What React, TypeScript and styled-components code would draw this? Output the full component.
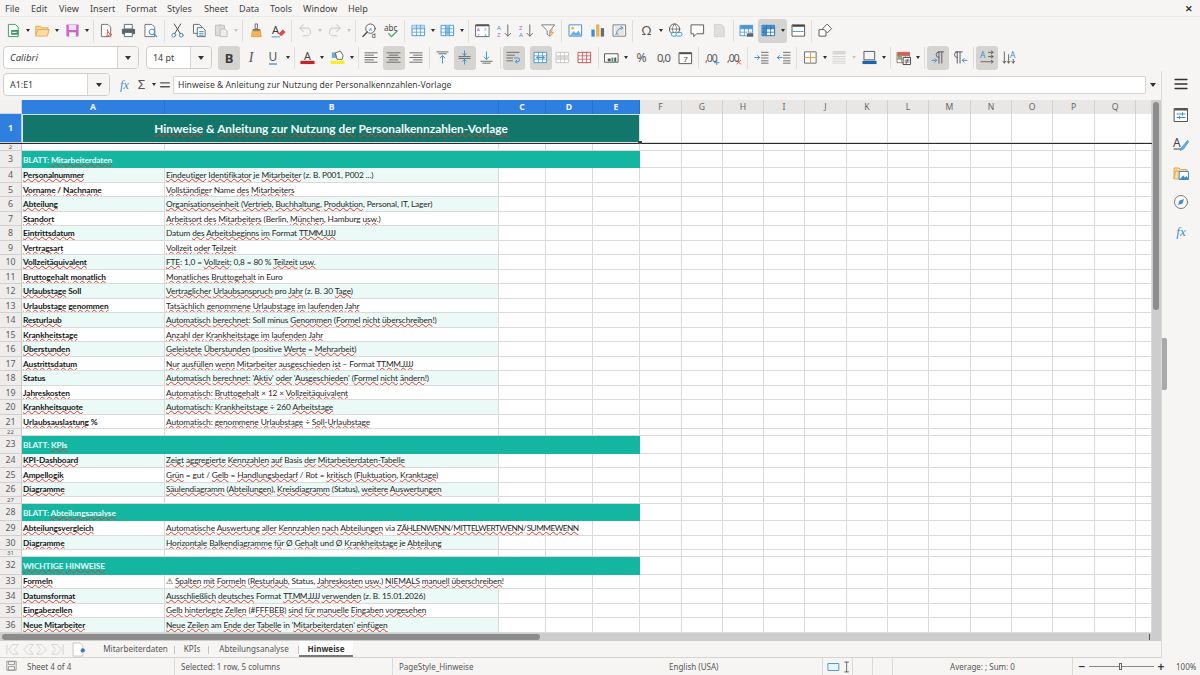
import React from "react";
import styled, { createGlobalStyle } from "styled-components";

const GlobalStyle = createGlobalStyle`
  html, body { margin: 0; padding: 0; width: 1200px; height: 675px; overflow: hidden; background: #f6f5f4; }
  * { box-sizing: border-box; }
`;

const UI = `"Noto Sans", "Open Sans", sans-serif`;
const SHEET = `Lato, "Open Sans", sans-serif`;

const COLS = [143, 334, 47, 47, 47, 42, 41, 41, 41, 42, 41, 41, 42, 41, 41, 42, 41, 16];
const LETTERS = ["A", "B", "C", "D", "E", "F", "G", "H", "I", "J", "K", "L", "M", "N", "O", "P", "Q", ""];
const TEMPLATE = `22px ${COLS.map((c) => c + "px").join(" ")}`;

const Page = styled.div`
  width: 1200px;
  height: 675px;
  display: flex;
  flex-direction: column;
  font-family: ${UI};
  color: #3c3c3c;
  overflow: hidden;
`;
const MenuBar = styled.div`
  height: 17px;
  display: flex;
  align-items: center;
  padding-left: 5px;
  font-size: 9.1px;
  color: #444;
  border-bottom: 1px solid #eceae8;
`;
const MenuItem = styled.span<{ $w: number }>`
  width: ${(p) => p.$w}px;
`;
const CloseMark = styled.span`
  margin-left: auto;
  margin-right: 7px;
  font-size: 9px;
  font-weight: 700;
  color: #333;
`;
const Toolbar = styled.div<{ $pad?: number }>`
  height: 27px;
  display: flex;
  align-items: center;
  padding-left: ${(p) => p.$pad ?? 2}px;
`;
const Btn = styled.div<{ $active?: boolean; $w?: number }>`
  width: ${(p) => p.$w ?? 22}px;
  height: 24px;
  flex: none;
  display: flex;
  align-items: center;
  justify-content: center;
  border-radius: 3px;
  background: ${(p) => (p.$active ? "#d6d4d1" : "transparent")};
`;
const ActiveGroup = styled.div`
  display: flex;
  flex: none;
  height: 24px;
  border-radius: 3px;
  background: #d6d4d1;
`;
const Drop = styled.div<{ $muted?: boolean }>`
  width: 7.5px;
  height: 24px;
  flex: none;
  display: flex;
  align-items: center;
  justify-content: center;
  &::after {
    content: "";
    border-left: 2.5px solid transparent;
    border-right: 2.5px solid transparent;
    border-top: 3px solid ${(p) => (p.$muted ? "#c4c4c4" : "#2e2e2e")};
  }
`;
const Sep = styled.div<{ $hide?: boolean }>`
  width: 5px;
  height: 22px;
  flex: none;
  display: flex;
  justify-content: center;
  &::after {
    content: "";
    width: 1px;
    background: ${(p) => (p.$hide ? "transparent" : "#e0dedb")};
  }
`;
const Combo = styled.div<{ $w: number; $split: number; $gap?: number }>`
  width: ${(p) => p.$w}px;
  margin-right: ${(p) => p.$gap ?? 0}px;
  height: 23px;
  flex: none;
  display: grid;
  grid-template-columns: ${(p) => p.$split}px 1fr;
  border: 1px solid #d0cecb;
  border-radius: 4px;
  overflow: hidden;
  background: #fff;
`;
const ComboText = styled.div<{ $italic?: boolean }>`
  display: flex;
  align-items: center;
  padding-left: 6px;
  font-size: ${(p) => (p.$italic ? 9.6 : 8.9)}px;
  font-style: ${(p) => (p.$italic ? "italic" : "normal")};
  color: #3c3c3c;
`;
const ComboArrow = styled.div`
  display: flex;
  align-items: center;
  justify-content: center;
  background: #f6f5f4;
  border-left: 1px solid #d8d6d3;
  &::after {
    content: "";
    border-left: 3.5px solid transparent;
    border-right: 3.5px solid transparent;
    border-top: 4px solid #333;
  }
`;
const Main = styled.div`
  height: 587px;
  display: flex;
`;
const Workspace = styled.div`
  width: 1161px;
  display: flex;
  flex-direction: column;
`;
const FormulaBar = styled.div`
  height: 29px;
  display: flex;
  align-items: flex-start;
  padding: 2px 0 0 3px;
`;
const FormulaTools = styled.div`
  display: flex;
  align-items: center;
  height: 23px;
  width: 63px;
  padding-left: 6px;
`;
const SmallBtn = styled.div<{ $w: number }>`
  width: ${(p) => p.$w}px;
  height: 23px;
  display: flex;
  align-items: center;
  justify-content: center;
`;
const FormulaInput = styled.div`
  width: 973px;
  height: 18px;
  margin-top: 3px;
  background: #fff;
  border: 1px solid #d8d6d3;
  border-radius: 1px;
  font-size: 8.65px;
  line-height: 16px;
  padding-left: 4px;
  color: #3c3c3c;
  white-space: nowrap;
`;
const FormulaDrop = styled(Drop)`
  height: 23px;
  width: 13px;
  &::after {
    border-left-width: 3.5px;
    border-right-width: 3.5px;
    border-top-width: 4px;
  }
`;
const SheetFrame = styled.div`
  display: grid;
  grid-template-columns: 1152px 9px;
  grid-template-rows: 533px 8px;
  height: 541px;
`;
const SheetGrid = styled.div`
  background: #fff;
  overflow: hidden;
`;
const HeadRow = styled.div`
  display: grid;
  grid-template-columns: ${TEMPLATE};
  height: 14px;
`;
const Corner = styled.div`
  background: #f2f1ef;
  border-right: 1px solid #d4d4d4;
  border-bottom: 1px solid #d4d4d4;
`;
const ColHead = styled.div<{ $sel: boolean }>`
  display: flex;
  align-items: center;
  justify-content: center;
  font-size: 8.6px;
  font-weight: ${(p) => (p.$sel ? 700 : 400)};
  background: ${(p) => (p.$sel ? "#2f7fe0" : "#e8e7e5")};
  color: ${(p) => (p.$sel ? "#f4f8ff" : "#666")};
  border-right: 1px solid ${(p) => (p.$sel ? "#2a70c8" : "#d2d1cf")};
`;
const Row = styled.div<{ $h: number; $freeze?: boolean }>`
  display: grid;
  grid-template-columns: ${TEMPLATE};
  height: ${(p) => p.$h}px;
  position: relative;
  border-bottom: ${(p) => (p.$freeze ? "1px solid #2b2b2b" : "none")};
`;
const RowHead = styled.div<{ $sel?: boolean; $tiny?: boolean }>`
  display: flex;
  align-items: center;
  justify-content: center;
  overflow: hidden;
  font-size: ${(p) => (p.$tiny ? 6 : 8.8)}px;
  line-height: ${(p) => (p.$tiny ? "6px" : "normal")};
  font-weight: ${(p) => (p.$sel ? 700 : 400)};
  background: ${(p) => (p.$sel ? "#2f7fe0" : "#eeedeb")};
  color: ${(p) => (p.$sel ? "#f4f8ff" : "#5c5c5c")};
  border-right: 1px solid #c9c9c9;
  border-bottom: 1px solid #d2d1cf;
`;
const Cell = styled.div<{ $tint?: boolean; $span?: number }>`
  grid-column: span ${(p) => p.$span ?? 1};
  display: flex;
  align-items: center;
  padding-left: 1px;
  white-space: nowrap;
  overflow: hidden;
  font-family: ${SHEET};
  font-size: 8.3px;
  letter-spacing: -0.11px;
  color: #262626;
  background: ${(p) => (p.$tint ? "#ebfaf7" : "#fff")};
  border-right: 1px solid #dadada;
  border-bottom: 1px solid #dadada;
`;
const LabelCell = styled(Cell)`
  font-weight: 700;
  color: #161616;
`;
const TitleCell = styled.div`
  grid-column: span 5;
  display: flex;
  align-items: center;
  justify-content: center;
  font-family: ${SHEET};
  font-size: 11.85px;
  font-weight: 700;
  color: #f2fbf9;
  background: #12776a;
  border: 1px solid #cfe6e2;
`;
const SectionCell = styled.div`
  grid-column: span 5;
  display: flex;
  align-items: center;
  padding-left: 1px;
  font-family: ${SHEET};
  font-size: 8.3px;
  letter-spacing: -0.11px;
  font-weight: 700;
  color: #e8fbf8;
  background: #14b6a2;
`;
const FillHandle = styled.div`
  position: absolute;
  left: 638px;
  bottom: -2px;
  width: 4px;
  height: 4px;
  background: #444;
`;
const Wavy = styled.span<{ $caps?: boolean }>`
  text-decoration: underline wavy #dc3a30;
  text-decoration-thickness: 1px;
  text-underline-offset: 0;
  text-decoration-skip-ink: none;
  letter-spacing: ${(p) => (p.$caps ? "-0.57px" : "inherit")};
`;
const VTrack = styled.div`
  grid-column: 2;
  grid-row: 1 / span 2;
  background: #cdcdcd;
  padding: 2px 2px 0 1px;
`;
const VThumb = styled.div`
  height: 208px;
  background: #8c8c8c;
  border-radius: 3px;
`;
const HTrack = styled.div`
  grid-column: 1;
  grid-row: 2;
  background: #cdcdcd;
  padding: 1px 2px;
  display: flex;
  align-items: stretch;
  justify-content: space-between;
`;
const HThumb = styled.div`
  width: 538px;
  background: #8c8c8c;
  border-radius: 3px;
`;
const HTick = styled.div`
  width: 1px;
  background: #555;
`;
const TabBar = styled.div`
  height: 17px;
  display: flex;
  align-items: stretch;
  font-size: 8.1px;
  color: #555;
  border-bottom: 1px solid #d6d4d1;
`;
const NavIcons = styled.div`
  width: 72px;
  padding-left: 5px;
  display: flex;
  align-items: center;
`;
const AddSheet = styled.div`
  width: 24px;
  display: flex;
  align-items: center;
`;
const Tab = styled.div<{ $w: number; $current?: boolean; $line?: boolean }>`
  width: ${(p) => p.$w}px;
  display: flex;
  align-items: center;
  justify-content: center;
  font-weight: ${(p) => (p.$current ? 700 : 400)};
  color: ${(p) => (p.$current ? "#333" : "#555")};
  background: ${(p) => (p.$current ? "#fff" : "transparent")};
  border-bottom: 2px solid ${(p) => (p.$current ? "#777" : "transparent")};
  position: relative;
  &::after {
    content: "";
    display: ${(p) => (p.$line ? "block" : "none")};
    position: absolute;
    right: 0;
    top: 5px;
    height: 8px;
    width: 1px;
    background: #c4c2bf;
  }
`;
const Sidebar = styled.div`
  width: 39px;
  display: flex;
  flex-direction: column;
  align-items: center;
  padding-top: 5px;
  gap: 13px;
  border-left: 1px solid #dcdad7;
  position: relative;
  & > svg:first-of-type {
    margin-bottom: 2px;
  }
`;
const SideHandle = styled.div`
  position: absolute;
  left: 0;
  top: 267px;
  width: 5px;
  height: 52px;
  background: #a9a9a9;
  border-radius: 0 2px 2px 0;
`;
const StatusBar = styled.div`
  height: 17px;
  display: grid;
  grid-template-columns: 23px 151px 218px 190px 240px 30px 20px 20px 180px 1fr;
  font-size: 8px;
  color: #555;
  align-items: center;
`;
const StatusCell = styled.div<{ $line?: boolean; $pad?: number; $center?: boolean }>`
  height: 100%;
  display: flex;
  align-items: center;
  justify-content: ${(p) => (p.$center ? "center" : "flex-start")};
  padding-left: ${(p) => p.$pad ?? 0}px;
  white-space: nowrap;
  border-left: ${(p) => (p.$line ? "1px solid #dcdad7" : "none")};
`;
const ZoomGroup = styled.div`
  display: flex;
  align-items: center;
  gap: 2px;
  padding-left: 4px;
`;
const ZoomSign = styled.span`
  width: 10px;
  font-size: 12px;
  font-weight: 600;
  text-align: center;
  color: #333;
  line-height: 12px;
`;
const ZoomTrack = styled.div`
  width: 65px;
  height: 1px;
  background: #888;
  position: relative;
`;
const ZoomKnob = styled.div`
  position: absolute;
  left: 30px;
  top: -3px;
  width: 3px;
  height: 7px;
  border: 1px solid #666;
  background: #eee;
`;
const ZoomValue = styled.span`
  margin-left: 8px;
`;

const Svg = ({ children, size = 15 }: { children: React.ReactNode; size?: number }) => (
  <svg width={size} height={size} viewBox="0 0 16 16" fill="none" overflow="visible" strokeLinecap="round" strokeLinejoin="round">
    {children}
  </svg>
);

const lines = (rows: [number, number, number][], color = "#666", w = 1) =>
  rows.map(([a, b, y], i) => <path key={i} d={`M${a} ${y}H${b}`} stroke={color} strokeWidth={w} />);

const gridIcon = (stroke: string, fill?: React.ReactNode) => (
  <>
    <rect x="1.5" y="2.5" width="13" height="11" fill="#fff" stroke={stroke} />
    {fill}
    <path d="M1.5 6.2h13M1.5 9.8h13M5.8 2.5v11M10.2 2.5v11" stroke={stroke} strokeWidth=".8" />
  </>
);

const SVG_TEXT = { fontFamily: "Noto Sans, sans-serif" };

const icons: Record<string, React.ReactNode> = {
  new: (<><path d="M3 1.5h7l3 3v10H3z" fill="#fff" stroke="#3f9a62" /><rect x="5.5" y="7.5" width="8" height="5" fill="#3f9a62" /><path d="M7 10h4" stroke="#fff" /></>),
  open: (<><path d="M.8 13V3.5h5l1.5 1.6h6.5V7" fill="#f9d69a" stroke="#e5a850" /><path d="M.8 13.5L3 7h12.2l-2 6.5z" fill="#fbdca3" stroke="#e5a850" /></>),
  save: (<><rect x="1.5" y="1.5" width="13" height="13" rx="1" fill="#c668c4" /><rect x="4" y="2" width="8" height="5.5" fill="#f5dff4" /><rect x="4.5" y="10" width="7" height="4.5" fill="#fff" /></>),
  pdf: (<><path d="M3 1.5h6.5l3 3v10H3z" fill="#fff" stroke="#707070" /><path d="M8 14.5c1-2 1.5-5 1-7.5.6 3 2 5 4.8 5.5-2-.2-4 .3-5.8 2z" stroke="#e5544d" /></>),
  print: (<><rect x="4" y="1.5" width="8" height="5" fill="#fff" stroke="#5b6770" /><rect x="1" y="6" width="14" height="6" rx="1" fill="#5b6770" /><rect x="4" y="10" width="8" height="4.5" fill="#fff" stroke="#5b6770" /></>),
  preview: (<><path d="M2.5 1.5h7l3 3v10h-10z" fill="#fff" stroke="#707070" /><circle cx="9.5" cy="9.5" r="3" fill="#fff" stroke="#3b8fd0" /><path d="M11.7 11.7l2.8 2.8" stroke="#3b8fd0" strokeWidth="1.3" /></>),
  cut: (<><circle cx="4" cy="13" r="2" stroke="#3b8fd0" /><circle cx="12" cy="13" r="2" stroke="#3b8fd0" /><path d="M5 11.3L11.5 1M11 11.3L4.5 1" stroke="#444" /></>),
  copy: (<><path d="M2 1.5h6L10.5 4v7H2z" fill="#fff" stroke="#5b6770" /><path d="M6 5h5.5L14 7.5v7H6z" fill="#fff" stroke="#5b6770" /><path d="M8 9h4M8 11h4M8 13h4" stroke="#3b8fd0" /></>),
  paste: (<><rect x="2" y="2.5" width="9" height="11" fill="#dcdcdc" stroke="#bdbdbd" /><rect x="5" y="1" width="3" height="3" fill="#cfcfcf" /><path d="M7 6.5h5l2 2v6H7z" fill="#eee" stroke="#bdbdbd" /></>),
  clone: (<><path d="M7 1h2v5H7z" stroke="#666" fill="#fff" /><path d="M4 6.5h8v2H4z" fill="#666" /><path d="M4 8.5h8l1 6H3z" fill="#f4b45e" stroke="#e39a3c" /></>),
  clear: (<><text x="1" y="11.5" fontSize="12" fill="#3c3c3c" style={SVG_TEXT}>A</text><path d="M8.5 11l4-4 3 2.5-4 4h-2z" fill="#e5474b" /><path d="M1 14.8h8" stroke="#3b8fd0" /></>),
  undo: (<><path d="M5.5 2L2 5.5 5.5 9" stroke="#cfcfcf" strokeWidth="1.2" /><path d="M2.5 5.5h7a4 4 0 0 1 0 8H6" stroke="#cfcfcf" strokeWidth="1.2" /></>),
  redo: (<><path d="M10.5 2L14 5.5 10.5 9" stroke="#cfcfcf" strokeWidth="1.2" /><path d="M13.5 5.5h-7a4 4 0 0 0 0 8H10" stroke="#cfcfcf" strokeWidth="1.2" /></>),
  find: (<><circle cx="9" cy="6" r="5" fill="#fff" stroke="#555" /><path d="M5.5 9.5L1 14.5" stroke="#555" strokeWidth="1.5" /><text x="6.8" y="8" fontSize="6.5" fill="#3b8fd0" style={SVG_TEXT}>a</text><text x="10.5" y="15.5" fontSize="7" fill="#444" style={SVG_TEXT}>d</text></>),
  spell: (<><text x="0" y="8" fontSize="8.6" fill="#444" style={SVG_TEXT}>abc</text><path d="M5 11.5l3 3 6-6" stroke="#4aa56c" strokeWidth="1.4" /></>),
  rows: gridIcon("#4a97d4", <rect x="1.5" y="2.5" width="13" height="3.7" fill="#bcdcf3" />),
  cols: gridIcon("#4a97d4", <rect x="5.8" y="2.5" width="4.4" height="11" fill="#8fc2ea" />),
  sort: (<><rect x="1" y="2" width="14" height="12.5" fill="#fff" stroke="#666" /><rect x="1" y="1.5" width="14" height="2" fill="#555" /><text x="2" y="8.4" fontSize="4.6" fill="#b24cc2" style={SVG_TEXT}>A</text><text x="2" y="14.6" fontSize="4.6" fill="#b24cc2" style={SVG_TEXT}>Z</text><text x="9.5" y="8.4" fontSize="4.6" fill="#3b8fd0" style={SVG_TEXT}>Z</text><text x="9.5" y="14.6" fontSize="4.6" fill="#3b8fd0" style={SVG_TEXT}>A</text></>),
  asc: (<><text x="0" y="7" fontSize="6.5" fill="#3b8fd0" style={SVG_TEXT}>A</text><text x="0" y="15" fontSize="6.5" fill="#c05fd0" style={SVG_TEXT}>Z</text><path d="M11.5 2v12M8.5 11l3 3 3-3" stroke="#666" /></>),
  desc: (<><text x="0" y="7" fontSize="6.5" fill="#c05fd0" style={SVG_TEXT}>Z</text><text x="0" y="15" fontSize="6.5" fill="#3b8fd0" style={SVG_TEXT}>A</text><path d="M11.5 2v12M8.5 11l3 3 3-3" stroke="#666" /></>),
  filter: (<><path d="M1 2h13.5l-5 6.5V14l-3-2V8.5z" fill="#fff" stroke="#777" /><path d="M12.5 6l-3 4.5h2L10 15l4-5.5h-2z" fill="#f2a53c" /></>),
  image: (<><rect x="1.5" y="2" width="13" height="12" fill="#fff" stroke="#3b8fd0" /><circle cx="5" cy="5.5" r="1.5" fill="#f3b04b" /><path d="M2 13.5l4-5 2.5 2.5L11 8l3.5 5.5z" fill="#6db0e2" /></>),
  chart: (<><rect x="1.5" y="7" width="3.5" height="7.5" fill="#3b8fd0" /><rect x="6.5" y="1.5" width="3.5" height="13" fill="#f3b04b" /><rect x="11.5" y="5.5" width="3.5" height="9" fill="#6a6a6a" /></>),
  pivot: (<><rect x="1.5" y="2" width="13" height="12" fill="#fff" stroke="#777" /><rect x="3" y="3.5" width="10" height="9" fill="#e4e4e4" /><path d="M5 11c0-3 2-5 6-6M9.5 3.8L11.5 5 10 6.8M6.5 12L5 11l-1 1.5" stroke="#3b8fd0" /></>),
  omega: (<text x="8" y="13" textAnchor="middle" fontSize="14" fill="#555" style={SVG_TEXT}>Ω</text>),
  link: (<><circle cx="7" cy="6.5" r="5.5" fill="#fff" stroke="#555" /><path d="M1.5 6.5h11M7 1c-3 3-3 8 0 11M7 1c3 3 3 8 0 11" stroke="#555" strokeWidth=".7" /><rect x="3.5" y="10" width="6" height="4" rx="2" fill="#fff" stroke="#3b8fd0" /><rect x="8.5" y="10" width="6.5" height="4" rx="2" fill="#fff" stroke="#3b8fd0" /></>),
  comment: (<path d="M1.5 2h13v9.5H7l-3 3v-3H1.5z" fill="#fff" stroke="#555" />),
  headerDoc: (<path d="M3 1.5h7l3 3v10H3z" fill="#dedede" stroke="#d0d0d0" />),
  printArea: (<>{gridIcon("#4a97d4", <rect x="1.5" y="2.5" width="13" height="3.7" fill="#4a97d4" />)}<rect x="8" y="10.5" width="7.5" height="4.5" rx="1" fill="#5b6770" stroke="#fff" strokeWidth=".6" /></>),
  freeze: gridIcon("#1f6fb5", <><rect x="1.5" y="2.5" width="13" height="3.7" fill="#3b8fd0" /><rect x="1.5" y="2.5" width="4.3" height="11" fill="#3b8fd0" /></>),
  split: (<><rect x="1.5" y="2" width="13" height="12" fill="#fff" stroke="#555" /><rect x="1.5" y="2" width="13" height="2" fill="#444" /><path d="M2 9h12" stroke="#3b8fd0" strokeDasharray="2 1" /></>),
  shapes: (<><rect x="1.5" y="7" width="7" height="7" fill="#fff" stroke="#555" /><path d="M10 1.5L14.5 6 10 10.5 5.5 6z" fill="#fff" stroke="#555" /></>),
  fontColor: (<><text x="8" y="10.5" textAnchor="middle" fontSize="11.5" fill="#444" style={SVG_TEXT}>A</text><rect x="0.5" y="11.5" width="15" height="3.5" fill="#c5232a" /></>),
  highlight: (<><rect x="2" y="2.5" width="6" height="6" fill="#3b8fd0" opacity=".7" /><path d="M6 3l5-2 3 5-1 4H8z" fill="#fff" stroke="#666" /><rect x="0.5" y="11.5" width="15" height="3.5" fill="#f6ee2c" /></>),
  left: <>{lines([[1, 14, 3], [1, 10, 5.5], [1, 14, 8], [1, 10, 10.5], [1, 14, 13]])}</>,
  center: <>{lines([[1, 15, 3], [3.5, 12.5, 5.5], [1, 15, 8], [3.5, 12.5, 10.5], [1, 15, 13]])}</>,
  right: <>{lines([[2, 15, 3], [6, 15, 5.5], [2, 15, 8], [6, 15, 10.5], [2, 15, 13]])}</>,
  top: (<>{lines([[2, 14, 2], [4, 12, 4]])}<path d="M8 14V6M5.5 8.5L8 6l2.5 2.5" stroke="#3b8fd0" /></>),
  middle: (<>{lines([[2, 14, 7], [2, 14, 9]])}<path d="M8 1v5M6 4l2 2 2-2M8 15v-5M6 12l2-2 2 2" stroke="#3b8fd0" /></>),
  bottom: (<>{lines([[2, 14, 12], [4, 12, 14]])}<path d="M8 2v8M5.5 7.5L8 10l2.5-2.5" stroke="#3b8fd0" /></>),
  wrap: (<>{lines([[1, 14, 2.5], [1, 9, 5.5], [1, 7, 8.5], [1, 7, 11.5]])}<path d="M9 8.5h3.5a2 2 0 0 1 0 4H10M11.5 11L10 12.5l1.5 1.5" stroke="#3b8fd0" /></>),
  merge: gridIcon("#4a97d4", <path d="M4 8h8M10.5 6.5L12 8l-1.5 1.5M5.5 6.5L4 8l1.5 1.5" stroke="#3b8fd0" />),
  unmerge: gridIcon("#c4c4c4", <rect x="1.5" y="6.2" width="13" height="3.6" fill="#dcdcdc" />),
  redGrid: gridIcon("#c65050"),
  currency: (<><rect x="1" y="4" width="14" height="9" fill="#fff" stroke="#555" /><circle cx="5.5" cy="10.5" r="1.8" fill="#555" /><rect x="8" y="8" width="2" height="4.5" fill="#3f9a62" /><rect x="11" y="8" width="2" height="4.5" fill="#555" /></>),
  percent: (<text x="8" y="13" textAnchor="middle" fontSize="13" fill="#555" style={SVG_TEXT}>%</text>),
  number: (<text x="8" y="13" textAnchor="middle" fontSize="12" letterSpacing="-1" fill="#555" style={SVG_TEXT}>0,0</text>),
  date: (<><rect x="1.5" y="3" width="13" height="11.5" fill="#fff" stroke="#555" /><rect x="1.5" y="2.5" width="13" height="2" fill="#555" /><text x="8" y="13" textAnchor="middle" fontSize="8.5" fill="#444" style={SVG_TEXT}>7</text></>),
  addDec: (<><text x="0" y="12.5" fontSize="11" letterSpacing="-1" fill="#555" style={SVG_TEXT}>,00</text><path d="M12.5 11v4.5M10 13.5h5" stroke="#3b8fd0" /></>),
  delDec: (<><text x="0" y="12.5" fontSize="11" letterSpacing="-1" fill="#555" style={SVG_TEXT}>,00</text><path d="M10.5 11l4 4M14.5 11l-4 4" stroke="#e5474b" /></>),
  indentInc: (<>{lines([[8, 15, 2.5], [8, 15, 5.5], [8, 15, 8.5], [8, 15, 11.5], [8, 15, 14]])}<path d="M1 8h5M4 6l2 2-2 2" stroke="#3b8fd0" /></>),
  indentDec: (<>{lines([[8, 15, 2.5], [8, 15, 5.5], [8, 15, 8.5], [8, 15, 11.5], [8, 15, 14]])}<path d="M1.5 8h5M3.5 6l-2 2 2 2" stroke="#3b8fd0" /></>),
  border: (<><rect x="2" y="2" width="12" height="12" fill="#fff" stroke="#666" /><path d="M8 2v12M2 8h12" stroke="#e39a3c" /></>),
  lineStyle: (<><path d="M1 2h13M1 4h13" stroke="#c8c8c8" strokeWidth="1.2" />{lines([[1, 14, 7], [1, 14, 9.5]], "#cfcfcf")}<path d="M1 12h13M1 14h13" stroke="#d2d2d2" strokeDasharray="1 1" /></>),
  borderColor: (<><rect x="2.5" y="1.5" width="11" height="9" fill="#f4f4f4" stroke="#555" /><rect x="0.5" y="11.5" width="15" height="3.5" fill="#1b66a8" /></>),
  conditional: (<>{gridIcon("#a07a6a", <><rect x="1.5" y="2.5" width="13" height="3.7" fill="#e4574f" /><rect x="1.5" y="6.2" width="4.3" height="3.6" fill="#6dbf78" /></>)}<rect x="8" y="8" width="7.5" height="7.5" fill="#fff" stroke="#444" /><path d="M9.5 10.8H14M9.5 12.8H14M12.8 9.5l-2 5" stroke="#444" strokeWidth=".8" /></>),
  ltr: (<><path d="M8.5 2v12M11.5 2v12M8.5 2h5M8.5 2a3 3 0 0 0 0 6" stroke="#5a5a5a" /><path d="M1 11h5M4 9l2 2-2 2" stroke="#3b8fd0" /></>),
  rtl: (<><path d="M4.5 2v12M7.5 2v12M3 2h7M4.5 2a3 3 0 0 0 0 6" stroke="#5a5a5a" /><path d="M15 11h-5M12 9l-2 2 2 2" stroke="#3b8fd0" /></>),
  ltrText: (<><text x="0" y="8" fontSize="9" fill="#3b8fd0" style={SVG_TEXT}>A</text><path d="M9 2.5h5M12 1l2 1.5L12 4M9 7h5M12 5.5L14 7l-2 1.5M1 12.5h13M12 11l2 1.5-2 1.5" stroke="#555" strokeWidth=".9" /></>),
  vertText: (<><text x="8.5" y="9" fontSize="9" fill="#3b8fd0" style={SVG_TEXT}>A</text><path d="M2.5 2v12M1 12l1.5 2L4 12M7 5v9M5.5 12L7 14l1.5-2M12 10v4M10.5 12l1.5 2 1.5-2" stroke="#555" strokeWidth=".9" /></>),
  fx: (<text x="8" y="12.5" textAnchor="middle" fontSize="13" fontStyle="italic" fontFamily="Liberation Serif, serif" fill="#3b8fd0">fx</text>),
  sum: (<text x="8" y="13" textAnchor="middle" fontSize="14" fill="#555" style={SVG_TEXT}>Σ</text>),
  equals: (<path d="M3 5.5h10M3 10h10" stroke="#555" strokeWidth="1.5" />),
  menu: (<path d="M2 3.5h12M2 8h12M2 12.5h12" stroke="#333" strokeWidth="1.3" />),
  props: (<><rect x="1.5" y="1.5" width="13" height="13" fill="#fff" stroke="#555" /><rect x="1.5" y="1.5" width="13" height="2" fill="#555" /><path d="M4 7h8M4 10.5h8" stroke="#3b8fd0" /><path d="M9.5 5.8v2.4M6.5 9.3v2.4" stroke="#3b8fd0" /></>),
  styles: (<><text x="0" y="11" fontSize="12" fill="#444" style={SVG_TEXT}>A</text><path d="M1 13h7" stroke="#444" /><path d="M14.5 4.5L9 11l-2 3.5L10.5 13l5-7z" fill="#6aaee0" stroke="#3b8fd0" strokeWidth=".7" /></>),
  gallery: (<><path d="M1 13.5V3h5l1.5 1.5H14V6" fill="#f9d69a" stroke="#e5a850" /><path d="M1 13.5L2.5 6H7v7.5z" fill="#fbdca3" stroke="#e5a850" /><rect x="6.5" y="6.5" width="9" height="8" fill="#fff" stroke="#3b8fd0" /><path d="M7 14l3-3.5 2 2 1.5-1.5 2 3z" fill="#3b8fd0" /></>),
  nav: (<><circle cx="8" cy="8" r="6.5" fill="#fff" stroke="#777" /><path d="M11 5L9.5 9.5 5 11l1.5-4.5z" fill="#3b8fd0" /></>),
  saved: (<><rect x="1.5" y="1.5" width="11" height="11" stroke="#888" /><rect x="3.5" y="2" width="7" height="3.5" stroke="#888" /><rect x="3.5" y="8" width="7" height="4.5" stroke="#888" /></>),
  pageRect: (<rect x="1.5" y="4" width="12" height="8" fill="#eaf5fb" stroke="#3b8fd0" />),
  ibeam: (<path d="M5 1.5h5M5 14.5h5M7.5 1.5v13" stroke="#444" />),
  first: (<path d="M2 3v10M8 3L4 8l4 5h6L10 8l4-5z" stroke="#d2d2d2" />),
  prev: (<path d="M9 3L4 8l5 5h5L10 8l4-5z" stroke="#d2d2d2" />),
  next: (<path d="M7 3l5 5-5 5H2l4-5-4-5z" stroke="#d2d2d2" />),
  last: (<path d="M14 3v10M8 3l4 5-4 5H2l4-5-4-5z" stroke="#d2d2d2" />),
  addTab: (<><path d="M1.5 1h7l3 3v11h-10z" fill="#fff" stroke="#c8c8c8" /><circle cx="11.5" cy="9" r="2.3" fill="#3b78c8" /></>),
};

const Icon = ({ n, size }: { n: string; size?: number }) => <Svg size={size}>{icons[n]}</Svg>;

const BoldGlyph = styled.span`
  font-size: 13px;
  font-weight: 700;
  color: #3c3c3c;
`;
const ItalicGlyph = styled.span`
  font-family: "Liberation Serif", serif;
  font-size: 14px;
  font-style: italic;
  color: #555;
`;
const UnderGlyph = styled.span`
  font-size: 12px;
  color: #555;
  line-height: 13px;
  border-bottom: 2px solid #7fb4de;
`;

// one toolbar item per token: name = button, "|" = separator, "v" = dropdown, "*name" = pressed
const renderTools = (tokens: string[]) =>
  tokens.map((t, i) => {
    if (t === "|") return <Sep key={i} />;
    if (t === "_") return <Sep key={i} $hide />;
    if (t === "v") return <Drop key={i} />;
    if (t === "v-") return <Drop key={i} $muted />;
    if (t.startsWith("*"))
      return (
        <Btn key={i} $active>
          <Icon n={t.slice(1)} />
        </Btn>
      );
    return (
      <Btn key={i}>
        <Icon n={t} />
      </Btn>
    );
  });

// long all-caps words run narrower in the reference's Calibri substitute
const isLongCaps = (word: string) => word.length >= 9 && word === word.toUpperCase();

const Spell = ({ text }: { text: string }) => (
  <>
    {text.split("_").map((part, i) =>
      i % 2 ? (
        <Wavy key={i} $caps={isLongCaps(part)}>{part}</Wavy>
      ) : (
        <span key={i}>{part}</span>
      )
    )}
  </>
);

type RowData =
  | { n: number; kind: "blank" }
  | { n: number; kind: "section"; text: string }
  | { n: number; a: string; b: string; tint?: boolean; span?: number; kind?: undefined };

const ROWS: RowData[] = [
  { n: 2, kind: "blank" },
  { n: 3, kind: "section", text: "BLATT: _Mitarbeiterdaten_" },
  { n: 4, tint: true, a: "_Personalnummer_", b: "_Eindeutiger_ _Identifikator_ je _Mitarbeiter_ (z. B. P001, P002 ...)" },
  { n: 5, a: "_Vorname_ / _Nachname_", b: "_Vollständiger_ Name _des_ _Mitarbeiters_" },
  { n: 6, tint: true, a: "_Abteilung_", b: "_Organisationseinheit_ (_Vertrieb_, _Buchhaltung_, _Produktion_, Personal, IT, Lager)" },
  { n: 7, a: "_Standort_", b: "_Arbeitsort_ _des_ _Mitarbeiters_ (Berlin, _München_, Hamburg _usw._)" },
  { n: 8, tint: true, a: "_Eintrittsdatum_", b: "Datum _des_ _Arbeitsbeginns_ _im_ Format _TT.MM.JJJJ_" },
  { n: 9, a: "_Vertragsart_", b: "_Vollzeit_ _oder_ _Teilzeit_" },
  { n: 10, tint: true, a: "_Vollzeitäquivalent_", b: "_FTE_: 1,0 = _Vollzeit_; 0,8 = 80 % _Teilzeit_ _usw._" },
  { n: 11, a: "_Bruttogehalt_ _monatlich_", b: "_Monatliches_ _Bruttogehalt_ in Euro" },
  { n: 12, tint: true, a: "_Urlaubstage_ Soll", b: "_Vertraglicher_ _Urlaubsanspruch_ pro _Jahr_ (z. B. 30 _Tage_)" },
  { n: 13, a: "_Urlaubstage_ _genommen_", b: "_Tatsächlich_ _genommene_ _Urlaubstage_ _im_ _laufenden_ _Jahr_" },
  { n: 14, tint: true, a: "_Resturlaub_", b: "_Automatisch_ _berechnet_: Soll minus _Genommen_ (_Formel_ _nicht_ _überschreiben_!)" },
  { n: 15, a: "_Krankheitstage_", b: "_Anzahl_ _der_ _Krankheitstage_ _im_ _laufenden_ _Jahr_" },
  { n: 16, tint: true, a: "_Überstunden_", b: "_Geleistete_ _Überstunden_ (positive _Werte_ = _Mehrarbeit_)" },
  { n: 17, a: "_Austrittsdatum_", b: "_Nur_ _ausfüllen_ _wenn_ _Mitarbeiter_ _ausgeschieden_ _ist_ – Format _TT.MM.JJJJ_" },
  { n: 18, tint: true, a: "Status", b: "_Automatisch_ _berechnet_: '_Aktiv_' _oder_ '_Ausgeschieden_' (_Formel_ _nicht_ _ändern_!)" },
  { n: 19, a: "_Jahreskosten_", b: "_Automatisch_: _Bruttogehalt_ × 12 × _Vollzeitäquivalent_" },
  { n: 20, tint: true, a: "_Krankheitsquote_", b: "_Automatisch_: _Krankheitstage_ ÷ 260 _Arbeitstage_" },
  { n: 21, a: "_Urlaubsauslastung_ %", b: "_Automatisch_: _genommene_ _Urlaubstage_ ÷ _Soll-Urlaubstage_" },
  { n: 22, kind: "blank" },
  { n: 23, kind: "section", text: "BLATT: _KPIs_" },
  { n: 24, tint: true, a: "_KPI-Dashboard_", b: "_Zeigt_ _aggregierte_ _Kennzahlen_ _auf_ Basis _der_ _Mitarbeiterdaten-Tabelle_" },
  { n: 25, a: "_Ampellogik_", b: "_Grün_ = gut / _Gelb_ = _Handlungsbedarf_ / Rot = _kritisch_ (_Fluktuation_, _Kranktage_)" },
  { n: 26, tint: true, a: "_Diagramme_", b: "_Säulendiagramm_ (_Abteilungen_), _Kreisdiagramm_ (Status), _weitere_ _Auswertungen_" },
  { n: 27, kind: "blank" },
  { n: 28, kind: "section", text: "BLATT: _Abteilungsanalyse_" },
  { n: 29, span: 3, a: "_Abteilungsvergleich_", b: "_Automatische_ _Auswertung_ _aller_ _Kennzahlen_ _nach_ _Abteilungen_ via _ZÄHLENWENN_/_MITTELWERTWENN_/_SUMMEWENN_" },
  { n: 30, tint: true, a: "_Diagramme_", b: "_Horizontale_ _Balkendiagramme_ _für_ Ø _Gehalt_ und Ø _Krankheitstage_ je _Abteilung_" },
  { n: 31, kind: "blank" },
  { n: 32, kind: "section", text: "_WICHTIGE_ _HINWEISE_" },
  { n: 33, span: 2, a: "_Formeln_", b: "⚠ _Spalten_ _mit_ _Formeln_ (_Resturlaub_, Status, _Jahreskosten_ _usw._) _NIEMALS_ _manuell_ _überschreiben_!" },
  { n: 34, tint: true, a: "_Datumsformat_", b: "_Ausschließlich_ _deutsches_ Format _TT.MM.JJJJ_ _verwenden_ (z. B. 15.01.2026)" },
  { n: 35, a: "_Eingabezellen_", b: "_Gelb_ _hinterlegte_ _Zellen_ (#_FFFBEB_) _sind_ _für_ _manuelle_ _Eingaben_ _vorgesehen_" },
  { n: 36, tint: true, a: "_Neue_ _Mitarbeiter_", b: "_Neue_ _Zeilen_ am _Ende_ _der_ _Tabelle_ in '_Mitarbeiterdaten_' _einfügen_" },
];

const TITLE = "_Hinweise_ & _Anleitung_ _zur_ _Nutzung_ _der_ _Personalkennzahlen-Vorlage_";

const heightOf = (r: RowData) => (r.kind === "blank" ? 6.75 : r.kind === "section" ? 17.5 : 14.5);

const blanks = (count: number) => Array.from({ length: count }, (_, i) => <Cell key={i} />);

const MENU: [string, number][] = [
  ["File", 26], ["Edit", 28], ["View", 31], ["Insert", 36], ["Format", 41], ["Styles", 37],
  ["Sheet", 35], ["Data", 31], ["Tools", 33], ["Window", 45], ["Help", 30],
];

const TOOLS_A = ["new", "v", "open", "v", "save", "v", "|", "pdf", "print", "preview", "|", "cut", "copy", "paste", "v-", "|", "clone", "clear", "|", "undo", "v-", "redo", "v-", "|", "find", "spell", "|", "rows", "v", "cols", "v", "|", "sort", "asc", "desc", "filter", "|", "image", "chart", "pivot", "|", "omega", "v", "link", "comment", "headerDoc", "|", "printArea"];
const TOOLS_A2 = ["split", "|", "shapes"];
const TOOLS_B = ["fontColor", "v", "highlight", "v", "|", "left", "*center", "right", "|", "top", "*middle", "bottom", "|", "*wrap", "_", "*merge", "unmerge", "redGrid", "|", "currency", "v", "percent", "number", "date", "|", "addDec", "delDec", "|", "indentInc", "indentDec", "|", "border", "v", "lineStyle", "v-", "borderColor", "v", "|", "conditional", "v", "|", "*ltr", "rtl", "|", "*ltrText", "vertText"];

export default function App() {
  return (
    <Page>
      <GlobalStyle />
      <MenuBar>
        {MENU.map(([m, w]) => (
          <MenuItem key={m} $w={w}>{m}</MenuItem>
        ))}
        <CloseMark>✕</CloseMark>
      </MenuBar>

      <Toolbar>
        {renderTools(TOOLS_A)}
        <ActiveGroup>
          <Btn><Icon n="freeze" /></Btn>
          <Drop />
        </ActiveGroup>
        {renderTools(TOOLS_A2)}
      </Toolbar>

      <Toolbar $pad={3}>
        <Combo $w={136} $split={113} $gap={7}>
          <ComboText $italic>Calibri</ComboText>
          <ComboArrow />
        </Combo>
        <Combo $w={66} $split={43} $gap={6}>
          <ComboText>14 pt</ComboText>
          <ComboArrow />
        </Combo>
        <Btn $active><BoldGlyph>B</BoldGlyph></Btn>
        <Btn><ItalicGlyph>I</ItalicGlyph></Btn>
        <Btn><UnderGlyph>U</UnderGlyph></Btn>
        <Drop />
        <Sep />
        {renderTools(TOOLS_B)}
      </Toolbar>

      <Main>
        <Workspace>
          <FormulaBar>
            <Combo $w={107} $split={83}>
              <ComboText>A1:E1</ComboText>
              <ComboArrow />
            </Combo>
            <FormulaTools>
              <SmallBtn $w={17}><Icon n="fx" /></SmallBtn>
              <SmallBtn $w={17}><Icon n="sum" /></SmallBtn>
              <Drop />
              <SmallBtn $w={15}><Icon n="equals" size={14} /></SmallBtn>
            </FormulaTools>
            <FormulaInput>Hinweise &amp; Anleitung zur Nutzung der Personalkennzahlen-Vorlage</FormulaInput>
            <FormulaDrop />
          </FormulaBar>

          <SheetFrame>
            <SheetGrid>
              <HeadRow>
                <Corner />
                {LETTERS.map((l, i) => (
                  <ColHead key={i} $sel={i < 5}>{l}</ColHead>
                ))}
              </HeadRow>

              <Row $h={30} $freeze>
                <RowHead $sel>1</RowHead>
                <TitleCell>
                  <span><Spell text={TITLE} /></span>
                </TitleCell>
                {blanks(13)}
                <FillHandle />
              </Row>

              {ROWS.map((r) => {
                if (r.kind === "blank")
                  return (
                    <Row key={r.n} $h={heightOf(r)}>
                      <RowHead $tiny>{r.n}</RowHead>
                      {blanks(18)}
                    </Row>
                  );
                if (r.kind === "section")
                  return (
                    <Row key={r.n} $h={heightOf(r)}>
                      <RowHead>{r.n}</RowHead>
                      <SectionCell><span><Spell text={r.text} /></span></SectionCell>
                      {blanks(13)}
                    </Row>
                  );
                const span = r.span ?? 1;
                return (
                  <Row key={r.n} $h={heightOf(r)}>
                    <RowHead>{r.n}</RowHead>
                    <LabelCell $tint={r.tint}><span><Spell text={r.a} /></span></LabelCell>
                    <Cell $tint={r.tint} $span={span}><span><Spell text={r.b} /></span></Cell>
                    {blanks(17 - span)}
                  </Row>
                );
              })}
            </SheetGrid>
            <VTrack><VThumb /></VTrack>
            <HTrack><HThumb /><HTick /></HTrack>
          </SheetFrame>

          <TabBar>
            <NavIcons>
              <Icon n="first" />
              <Icon n="prev" />
              <Icon n="next" />
              <Icon n="last" />
            </NavIcons>
            <AddSheet><Icon n="addTab" /></AddSheet>
            <Tab $w={79} $line>Mitarbeiterdaten</Tab>
            <Tab $w={34} $line>KPIs</Tab>
            <Tab $w={90} $line>Abteilungsanalyse</Tab>
            <Tab $w={54} $current>Hinweise</Tab>
          </TabBar>
        </Workspace>

        <Sidebar>
          <SideHandle />
          <Icon n="menu" size={16} />
          <Icon n="props" size={16} />
          <Icon n="styles" size={16} />
          <Icon n="gallery" size={16} />
          <Icon n="nav" size={16} />
          <Icon n="fx" size={16} />
        </Sidebar>
      </Main>

      <StatusBar>
        <StatusCell $pad={6}><Icon n="saved" size={13} /></StatusCell>
        <StatusCell $pad={4}>Sheet 4 of 4</StatusCell>
        <StatusCell $line $pad={6}>Selected: 1 row, 5 columns</StatusCell>
        <StatusCell $line $pad={6}>PageStyle_Hinweise</StatusCell>
        <StatusCell $pad={87}>English (USA)</StatusCell>
        <StatusCell $line $pad={4}><Icon n="pageRect" size={14} /><Icon n="ibeam" size={12} /></StatusCell>
        <StatusCell $line />
        <StatusCell $line />
        <StatusCell $line $center>Average: ; Sum: 0</StatusCell>
        <StatusCell $line>
          <ZoomGroup>
            <ZoomSign>−</ZoomSign>
            <ZoomTrack><ZoomKnob /></ZoomTrack>
            <ZoomSign>+</ZoomSign>
            <ZoomValue>100%</ZoomValue>
          </ZoomGroup>
        </StatusCell>
      </StatusBar>
    </Page>
  );
}
